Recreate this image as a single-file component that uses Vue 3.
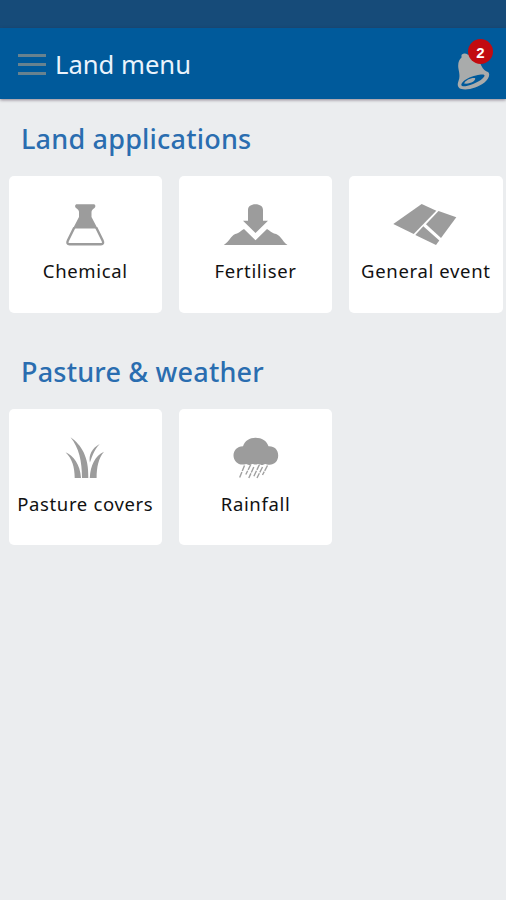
<script setup>
import { ref } from 'vue'

const title = 'Land menu'
const notifications = ref(2)

const sections = [
  {
    title: 'Land applications',
    items: [
      { icon: 'chemical', label: 'Chemical' },
      { icon: 'fertiliser', label: 'Fertiliser' },
      { icon: 'general', label: 'General event' },
    ],
  },
  {
    title: 'Pasture & weather',
    items: [
      { icon: 'pasture', label: 'Pasture covers' },
      { icon: 'rainfall', label: 'Rainfall' },
    ],
  },
]
</script>

<template>
  <div class="app">
    <div class="status-bar"></div>

    <header class="header">
      <button class="menu-button" aria-label="Menu">
        <span></span>
        <span></span>
        <span></span>
      </button>
      <h1 class="header-title">{{ title }}</h1>
      <div class="bell">
        <svg class="bell-icon" viewBox="0 0 36 38">
          <path
            fill-rule="evenodd"
            d="M6.500 3C8 1 11 1 12.500 2.500C19 3 24 8 26.500 14C28 17.500 30.500 19 33 20C35.500 22 34 27 29.500 30.500C23 35.500 13 38.500 6.500 37C2.500 36 2 32.500 3.500 29C5 25.500 4.500 22 3.500 17C2.500 11.500 4 7.500 6.500 5.500ZM7 31C5 34 7.500 35 12.500 33.700C20 32 28 27.500 29.500 24C30 22 26.500 22 21 23.500C15 25 9.500 27.500 7 31Z"
          />
          <path d="M9 31.500C10.500 28 16 25.500 20 26C21.500 28.500 15 32.500 9 31.500Z" />
        </svg>
        <span class="badge">{{ notifications }}</span>
      </div>
    </header>

    <main class="content">
      <section v-for="section in sections" :key="section.title" class="section">
        <h2 class="section-title">{{ section.title }}</h2>
        <div class="grid">
          <div v-for="item in section.items" :key="item.icon" class="card">
            <svg class="card-icon" viewBox="0 0 70 44">
              <g v-if="item.icon === 'chemical'">
                <path d="M27 1.300H43.500C45.800 1.300 45.800 4 44.500 5C42.500 6.500 41.500 7.500 41.500 9V14L47.500 25.500H23L29 14V9C29 7.500 28 6.500 26 5C24.700 4 24.700 1.300 27 1.300Z" />
                <path class="line" d="M24.300 24.500L17.900 37.500C16.700 40 17.500 41.300 19.500 41.300H51C53 41.300 53.800 40 52.600 37.500L46.200 24.500" />
              </g>
              <g v-else-if="item.icon === 'fertiliser'">
                <path d="M27 17.700V7C27 3.500 30 1.300 34.500 1.300S42 3.500 42 7V17.700H47L34.500 30L22 17.700Z" />
                <path d="M2.800 42C6 40 8 37 10 34.500C12 32 13.500 31 16 30.500C19 29.500 20.500 27 23 26L34.500 37.200L46 26C49 27.500 50 29.500 53 30.500C56 31 58 32.500 60 35C62 37.500 63.500 40 66.500 42Z" />
              </g>
              <g v-else-if="item.icon === 'general'">
                <path d="M30.700 1L45.300 7.700L22.700 31L2.300 21Z" />
                <path d="M47.500 8L65.300 14.300L50 35L35 21.300Z" />
                <path d="M32.300 23.300L48.300 37.500L45 42L24.300 32Z" />
              </g>
              <g v-else-if="item.icon === 'pasture'">
                <path d="M15.500 16.300C23.500 20 30 28 31 42H24.700C24.700 31 22 22.500 15.500 16.300Z" />
                <path d="M20.500 1.300C31.500 9 39 21 38.300 42H32C32 25 29 12 20.500 1.300Z" />
                <path d="M54 15.700C48.500 22 46.700 31 46.600 42H39.800C40.500 29 45 20 54 15.700Z" />
                <path d="M49.700 8C44 14 42.500 19.500 39.900 26.500C38.500 19 42 12 49.700 8Z" />
              </g>
              <g v-else>
                <path d="M22 10.300C24 4.500 28.500 1.700 34.500 1.700C41 1.700 45.500 4.500 47.500 10.300C53.500 10 57.200 14 57.200 19.500C57.200 25.500 53 29 48 28.700C46.500 28.700 45.500 28.400 44.500 28C43.500 27.500 42.500 29 41 29C39.500 29 38.500 27.500 37 28C35 28.700 34 28.700 32 28C30.500 27.500 29.500 29 28 29C26.500 29 26 27.800 24.500 28.200C18 30 12.500 25.500 12.500 19.500C12.500 14.500 16 10.500 22 10.300Z" />
                <path
                  class="rain"
                  d="M23.500 29.500L18.500 42M29.800 28.500L24.800 38.500M32.800 31L27.800 42M38.500 28.500L32.500 41M41.500 31L36 42M46.500 29.500L41.500 39"
                />
              </g>
            </svg>
            <span class="card-label">{{ item.label }}</span>
          </div>
        </div>
      </section>
    </main>
  </div>
</template>

<style>
body {
  margin: 0;
  background-color: #ebedef;
}
</style>

<style scoped>
.app {
  min-height: 100vh;
  background-color: #ebedef;
  font-family: 'Noto Sans', 'Open Sans', sans-serif;
  overflow: hidden;
}

.status-bar {
  height: 28px;
  background-color: #164b79;
}

.header {
  display: flex;
  align-items: center;
  box-sizing: border-box;
  height: 71px;
  padding: 0 15px 0 18px;
  background-color: #005a9b;
  box-shadow: 0 1px 3px rgba(60, 40, 60, 0.55);
}

.menu-button {
  display: flex;
  flex-direction: column;
  gap: 6px;
  width: 28px;
  margin-top: 1px;
  padding: 0;
  border: none;
  background: none;
}

.menu-button span {
  height: 3px;
  background-color: #67828f;
}

.header-title {
  flex: 1;
  margin: 2px 0 0 9px;
  color: #eaf3fc;
  font-size: 25.6px;
  font-weight: 400;
  line-height: 36px;
}

.bell {
  position: relative;
  width: 36px;
  height: 38px;
  margin-top: 15px;
}

.bell-icon {
  display: block;
  width: 36px;
  height: 38px;
  fill: #a9abab;
}

.badge {
  position: absolute;
  top: -13px;
  right: -2px;
  width: 25px;
  height: 25px;
  border-radius: 50%;
  background-color: #c20b10;
  color: #fff;
  font-family: 'Liberation Sans', Arial, sans-serif;
  font-size: 15px;
  font-weight: 700;
  line-height: 27px;
  text-align: center;
}

.section {
  padding: 22px 3px 0 8.5px;
  margin-bottom: 38px;
}

.section + .section {
  padding-top: 3px;
}

.section-title {
  margin: 0 0 19px 12.5px;
  color: #2a6db0;
  font-size: 27px;
  font-weight: 500;
  line-height: 36px;
  letter-spacing: 0.2px;
}

.grid {
  display: grid;
  grid-template-columns: repeat(3, 153.500px);
  gap: 16.800px;
}

.card {
  display: flex;
  flex-direction: column;
  align-items: center;
  box-sizing: border-box;
  height: 136.500px;
  padding-top: 27px;
  border-radius: 5px;
  background-color: #fff;
}

.card-icon {
  width: 70px;
  height: 44px;
  fill: #9c9c9c;
}

.line {
  fill: none;
  stroke: #9c9c9c;
  stroke-width: 2.4;
}

.rain {
  fill: none;
  stroke: #a0a0a0;
  stroke-width: 1.4;
  stroke-dasharray: 6 1;
}

.card-label {
  margin-top: 11px;
  color: #111;
  font-size: 18.500px;
  font-weight: 400;
  line-height: 26px;
  letter-spacing: 0.65px;
  white-space: nowrap;
}
</style>
